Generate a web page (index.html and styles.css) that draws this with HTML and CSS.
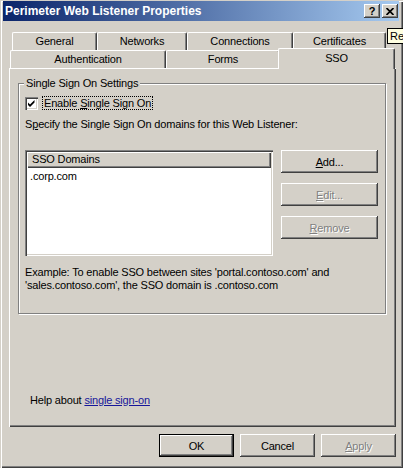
FILE: index.html
```html
<!DOCTYPE html>
<html>
<head>
<meta charset="utf-8">
<title>Perimeter Web Listener Properties</title>
<link rel="stylesheet" href="styles.css">
</head>
<body>
<div class="window">
  <div class="titlebar">
    <span class="title">Perimeter Web Listener Properties</span>
    <div class="tbtns">
      <span class="tbtn help-btn">?</span>
      <span class="tbtn"><svg width="8" height="7" viewBox="0 0 8 7"><path d="M0.5 0 L7.5 7 M7.5 0 L0.5 7" stroke="#000" stroke-width="1.7"/></svg></span>
    </div>
  </div>
  <div class="client">
    <div class="tabs">
      <div class="tabrow row1">
        <div class="tab t-general">General</div>
        <div class="tab t-networks">Networks</div>
        <div class="tab t-connections">Connections</div>
        <div class="tab t-certs">Certificates</div>
      </div>
      <div class="tabrow row2">
        <div class="tab t-auth">Authentication</div>
        <div class="tab t-forms">Forms</div>
        <div class="tab t-sso sel">SSO</div>
      </div>
    </div>
    <div class="panel">
      <div class="group">
        <div class="legend">Single Sign On Settings</div>
        <div class="checkrow">
          <span class="checkbox"><svg width="9" height="9" viewBox="0 0 9 9"><path d="M1 3.5 L3 5.5 L7.5 1 L7.5 3.5 L3 8 L1 6 Z" fill="#000"/></svg></span>
          <span class="focuslabel">Enable <u>S</u>ingle Sign On</span>
        </div>
        <p class="text specify">S<u>p</u>ecify the Single Sign On domains for this Web Listener:</p>
        <div class="listarea">
          <div class="listbox">
            <div class="listhead">SSO Domains</div>
            <div class="listitem">.corp.com</div>
          </div>
          <div class="sidebtns">
            <div class="btn"><span><u>A</u>dd...</span></div>
            <div class="btn disabled"><span><u>E</u>dit...</span></div>
            <div class="btn disabled"><span><u>R</u>emove</span></div>
          </div>
        </div>
        <p class="text example">Example: To enable SSO between sites 'portal.contoso.com' and<br>'sales.contoso.com', the SSO domain is .contoso.com</p>
      </div>
      <p class="text helpline">Help about <a class="link" href="#">single sign-on</a></p>
    </div>
    <div class="footer">
      <div class="btn default"><span>OK</span></div>
      <div class="btn"><span>Cancel</span></div>
      <div class="btn disabled"><span><u>A</u>pply</span></div>
    </div>
  </div>
  <div class="tooltip">Re</div>
</div>
</body>
</html>
```
FILE: styles.css
```css
* { box-sizing: border-box; }
html, body { margin: 0; padding: 0; }
body {
  width: 403px;
  height: 468px;
  overflow: hidden;
  background: #d4d0c8;
  font-family: "Liberation Sans", Arial, sans-serif;
  font-size: 11px;
  letter-spacing: -0.17px;
  color: #000;
}
.window {
  position: relative;
  width: 403px;
  height: 468px;
  background: #d4d0c8;
  padding: 1px 4px 0 3px;
  box-shadow: inset 1px 1px #d4d0c8, inset 2px 2px #fff, inset -1px -1px #404040, inset -2px -2px #808080;
  display: flex;
  flex-direction: column;
}
.titlebar {
  height: 20px;
  flex: none;
  display: flex;
  align-items: center;
  justify-content: space-between;
  padding: 0 1px 0 2px;
  background: linear-gradient(to right, #0a246a, #a6caf0);
}
.title {
  color: #fff;
  font-weight: bold;
  font-size: 12px;
  letter-spacing: 0;
}
.tbtns { display: flex; gap: 2px; }
.tbtn {
  width: 16px;
  height: 14px;
  background: #d4d0c8;
  box-shadow: inset -1px -1px #404040, inset 1px 1px #fff, inset -2px -2px #808080;
  display: flex;
  align-items: center;
  justify-content: center;
  font-weight: bold;
  font-size: 11px;
  line-height: 1;
}
.client {
  padding: 0 0 0 6px;
  display: flex;
  flex-direction: column;
}
.tabs { margin-top: 11px; }
.tabrow { display: flex; height: 18px; }
.row1 { margin-left: 3px; }
.row2 { margin-left: 1px; }
.tab {
  height: 18px;
  display: flex;
  align-items: center;
  justify-content: center;
  border-top: 1px solid #fff;
  border-left: 1px solid #fff;
  border-right: 1px solid #404040;
  border-radius: 2px 2px 0 0;
  box-shadow: inset -1px 0 #808080;
  background: #d4d0c8;
  padding-bottom: 1px;
}
.t-general { width: 85px; }
.t-networks { width: 90px; }
.t-connections { width: 106px; }
.t-certs { width: 93px; }
.t-auth { width: 156px; }
.t-forms { width: 114px; }
.t-sso { width: 117px; }
.tab.sel {
  position: relative;
  z-index: 1;
  height: 21px;
  margin: -2px -2px -1px -2px;
  padding-bottom: 3px;
}
.panel {
  width: 387px;
  height: 359px;
  flex: none;
  box-shadow: inset 1px 1px #fff, inset -1px -1px #404040, inset -2px -2px #808080;
  padding: 15px 0 0 9px;
  display: flex;
  flex-direction: column;
}
.group {
  width: 368px;
  height: 231px;
  flex: none;
  border: 1px solid #808080;
  box-shadow: inset 1px 1px #fff, 1px 1px #fff;
  padding: 0 0 0 6px;
}
.legend {
  margin: -7px 0 0 -1px;
  padding: 0 2px;
  width: max-content;
  background: #d4d0c8;
  line-height: 13px;
}
.checkrow {
  display: flex;
  align-items: center;
  height: 14px;
  margin-top: 6px;
}
.checkbox {
  width: 13px;
  height: 13px;
  background: #fff;
  box-shadow: inset 1px 1px #808080, inset 2px 2px #404040, inset -1px -1px #fff, inset -2px -2px #d4d0c8;
  display: flex;
  align-items: center;
  justify-content: center;
}
.focuslabel {
  margin-left: 4px;
  height: 14px;
  line-height: 12px;
  padding: 0 1px;
  border: 1px dotted #000;
}
.text { margin: 0; line-height: 13px; }
.specify { margin-top: 8px; }
.listarea {
  display: flex;
  gap: 8px;
  margin-top: 19px;
}
.listbox {
  width: 248px;
  height: 106px;
  background: #fff;
  padding: 2px;
  box-shadow: inset 1px 1px #808080, inset 2px 2px #404040, inset -1px -1px #fff, inset -2px -2px #d4d0c8;
}
.listhead {
  height: 16px;
  line-height: 15px;
  padding-left: 5px;
  background: #d4d0c8;
  box-shadow: inset 1px 1px #fff, inset -1px -1px #404040, inset -2px -2px #808080;
}
.listitem {
  line-height: 14px;
  padding-left: 3px;
  margin-top: 1px;
}
.sidebtns {
  display: flex;
  flex-direction: column;
  gap: 10px;
}
.sidebtns .btn { width: 97px; }
.btn {
  width: 75px;
  height: 23px;
  display: flex;
  align-items: center;
  justify-content: center;
  background: #d4d0c8;
  box-shadow: inset -1px -1px #404040, inset 1px 1px #fff, inset -2px -2px #808080;
}
.btn.default {
  border: 1px solid #000;
}
.btn.disabled {
  color: #808080;
  text-shadow: 1px 1px #fff;
}
.example { margin-top: 10px; }
.helpline { margin: 80px 0 0 12px; }
.link { color: #16169a; }
.footer {
  width: 387px;
  display: flex;
  justify-content: flex-end;
  gap: 6px;
  margin-top: 7px;
}
.tooltip {
  position: absolute;
  left: 387px;
  top: 28px;
  height: 16px;
  padding: 0 1px 0 2px;
  border: 1px solid #000;
  border-right: none;
  background: #ffffe1;
  line-height: 14px;
  white-space: nowrap;
  letter-spacing: 0;
}
```
